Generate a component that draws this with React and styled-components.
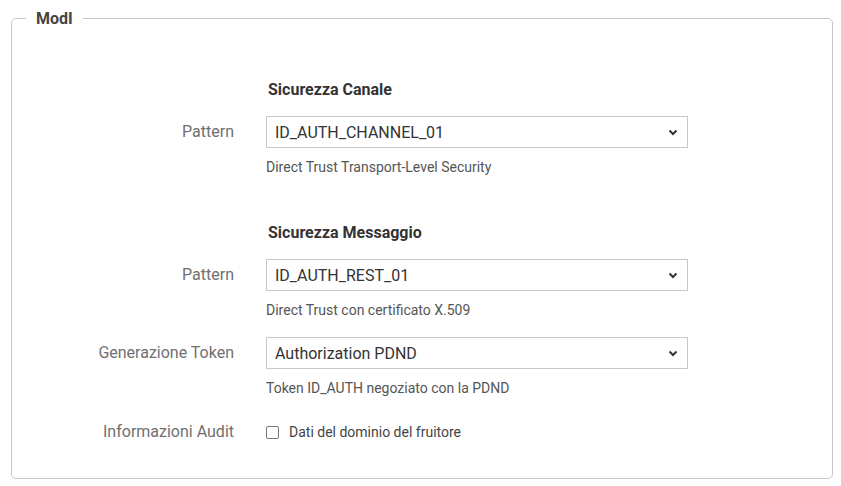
import React from 'react';
import styled, { createGlobalStyle } from 'styled-components';

const GlobalStyle = createGlobalStyle`
  body {
    margin: 0;
    background: #fff;
    font-family: Roboto, "Liberation Sans", sans-serif;
  }
`;

const Page = styled.div`
  padding: 9px 8px 8px 11px;
  width: 822px;
`;

const Fieldset = styled.fieldset`
  margin: 0;
  padding: 52px 0 29px 0;
  border: 1px solid #c8c8c8;
  border-radius: 5px;
  min-width: 0;
`;

const Legend = styled.legend`
  margin-left: 14px;
  padding: 0 10px;
  font-size: 16px;
  font-weight: 700;
  color: #444;
`;

const Section = styled.div`
  display: grid;
  grid-template-columns: 222px 422px;
  column-gap: 32px;
  align-items: start;
  & + & {
    margin-top: 29px;
  }
`;

const Heading = styled.h3`
  grid-column: 2;
  margin: 0 0 16px 2px;
  font-size: 16px;
  font-weight: 700;
  color: #333;
  line-height: 20px;
`;

const Label = styled.label`
  grid-column: 1;
  text-align: right;
  font-size: 16px;
  color: #707070;
  line-height: 20px;
  padding-top: ${(p) => (p.$check ? '7px' : '6px')};
`;

const Field = styled.div`
  grid-column: 2;
  display: flex;
  flex-direction: column;
  margin-bottom: ${(p) => (p.$last ? '0' : '18px')};
`;

const SelectWrap = styled.div`
  position: relative;
  height: 32px;
  border: 1px solid #c8c8c8;
  box-sizing: border-box;
  background: #fff;
`;

const Select = styled.select`
  appearance: none;
  width: 100%;
  height: 100%;
  border: 0;
  background: transparent;
  padding: 0 30px 0 8px;
  font-family: Roboto, "Liberation Sans", sans-serif;
  font-size: 16px;
  color: #333;
  outline: none;
`;

const Chevron = styled.svg`
  position: absolute;
  right: 9px;
  top: 12px;
  pointer-events: none;
`;

const Note = styled.div`
  margin-top: 10px;
  font-size: 14px;
  color: #555;
  line-height: 18px;
`;

const CheckRow = styled.label`
  display: flex;
  align-items: center;
  gap: 10px;
  height: 34px;
  font-size: 14px;
  color: #444;
`;

const Box = styled.span`
  width: 13px;
  height: 13px;
  border: 1px solid #767676;
  border-radius: 2px;
  box-sizing: border-box;
`;

const SelectField = ({ value, note, last }) => (
  <Field $last={last}>
    <SelectWrap>
      <Select defaultValue={value}>
        <option>{value}</option>
      </Select>
      <Chevron width="10" height="7" viewBox="0 0 10 7">
        <path d="M1.5 1.5 L5 5 L8.5 1.5" fill="none" stroke="#333" strokeWidth="2" />
      </Chevron>
    </SelectWrap>
    {note && <Note>{note}</Note>}
  </Field>
);

export default function App() {
  return (
    <Page>
      <GlobalStyle />
      <Fieldset>
        <Legend>ModI</Legend>
        <Section>
          <Heading>Sicurezza Canale</Heading>
          <Label>Pattern</Label>
          <SelectField value="ID_AUTH_CHANNEL_01" note="Direct Trust Transport-Level Security" />
        </Section>
        <Section>
          <Heading>Sicurezza Messaggio</Heading>
          <Label>Pattern</Label>
          <SelectField value="ID_AUTH_REST_01" note="Direct Trust con certificato X.509" />
          <Label>Generazione Token</Label>
          <SelectField value="Authorization PDND" note="Token ID_AUTH negoziato con la PDND" />
          <Label $check>Informazioni Audit</Label>
          <Field $last>
            <CheckRow>
              <Box />
              Dati del dominio del fruitore
            </CheckRow>
          </Field>
        </Section>
      </Fieldset>
    </Page>
  );
}
